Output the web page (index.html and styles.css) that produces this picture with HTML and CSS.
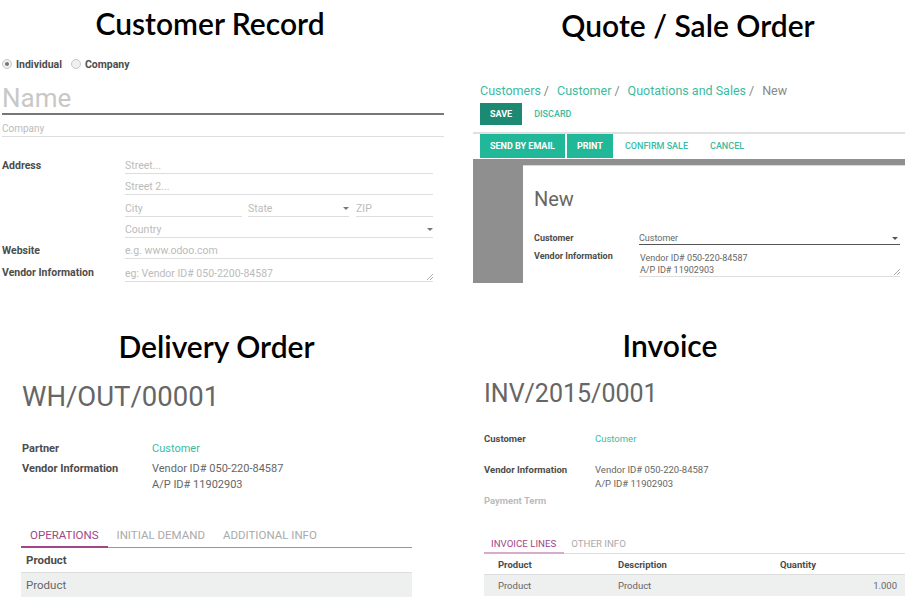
FILE: index.html
```html
<!DOCTYPE html>
<html lang="en">
<head>
<meta charset="utf-8">
<title>Odoo records</title>
<link rel="stylesheet" href="styles.css">
</head>
<body>
<main class="board">

  <section class="panel customer">
    <h2 class="ptitle">Customer Record</h2>
    <div class="radios">
      <span class="radio checked"></span><span class="rlabel">Individual</span>
      <span class="radio"></span><span class="rlabel">Company</span>
    </div>
    <div class="name-input">Name</div>
    <div class="company-input">Company</div>
    <div class="cform">
      <div class="crow"><span class="clabel">Address</span><span class="cfield">Street...</span></div>
      <div class="crow"><span class="clabel"></span><span class="cfield">Street 2...</span></div>
      <div class="crow gap1"><span class="clabel"></span><span class="cfield city">City</span><span class="cfield state">State<i class="caret"></i></span><span class="cfield zip">ZIP</span></div>
      <div class="crow"><span class="clabel"></span><span class="cfield">Country<i class="caret"></i></span></div>
      <div class="crow"><span class="clabel">Website</span><span class="cfield">e.g. www.odoo.com</span></div>
      <div class="crow tall"><span class="clabel">Vendor Information</span><span class="cfield">eg: Vendor ID# 050-2200-84587<svg class="grip" width="6" height="6" viewBox="0 0 6 6"><path d="M6 0L0 6M6 3L3 6" stroke="#999" stroke-width="0.8" fill="none"/></svg></span></div>
    </div>
  </section>

  <section class="panel quote">
    <h2 class="ptitle">Quote / Sale Order</h2>
    <nav class="crumbs"><a>Customers</a><span class="sep">/</span><a>Customer</a><span class="sep">/</span><a>Quotations and Sales</a><span class="sep">/</span><span class="cur">New</span></nav>
    <div class="cp-buttons"><span class="btn dark">SAVE</span><span class="btn link-btn">DISCARD</span></div>
    <div class="statusbar"><span class="btn">SEND BY EMAIL</span><span class="btn">PRINT</span><span class="btn link-btn">CONFIRM SALE</span><span class="btn link-btn">CANCEL</span></div>
    <div class="backdrop">
      <div class="sheet">
        <div class="sheet-title">New</div>
        <div class="qrow"><span class="qlabel">Customer</span><span class="qfield select">Customer<i class="caret dark"></i></span></div>
        <div class="qrow area-row"><span class="qlabel">Vendor Information</span><span class="qfield area"><span>Vendor ID# 050-220-84587<br>A/P ID# 11902903</span><svg class="grip" width="6" height="6" viewBox="0 0 6 6"><path d="M6 0L0 6M6 3L3 6" stroke="#999" stroke-width="0.8" fill="none"/></svg></span></div>
      </div>
    </div>
  </section>

  <section class="panel delivery">
    <h2 class="ptitle">Delivery Order</h2>
    <div class="doc-name">WH/OUT/00001</div>
    <div class="dfields">
      <div class="drow"><span class="dlabel">Partner</span><span class="dval link">Customer</span></div>
      <div class="drow"><span class="dlabel">Vendor Information</span><span class="dval">Vendor ID# 050-220-84587<br>A/P ID# 11902903</span></div>
    </div>
    <div class="dtabs"><span class="dtab active">OPERATIONS</span><span class="dtab">INITIAL DEMAND</span><span class="dtab">ADDITIONAL INFO</span></div>
    <div class="dtable">
      <div class="dthead">Product</div>
      <div class="dtrow">Product</div>
    </div>
  </section>

  <section class="panel invoice">
    <h2 class="ptitle">Invoice</h2>
    <div class="inv-name">INV/2015/0001</div>
    <div class="ifields">
      <div class="irow"><span class="ilabel">Customer</span><span class="ival link">Customer</span></div>
      <div class="irow vendor"><span class="ilabel">Vendor Information</span><span class="ival">Vendor ID# 050-220-84587<br>A/P ID# 11902903</span></div>
      <div class="irow term"><span class="ilabel">Payment Term</span></div>
    </div>
    <div class="itabs"><span class="itab active">INVOICE LINES</span><span class="itab">OTHER INFO</span></div>
    <div class="itable">
      <div class="ithead"><span>Product</span><span>Description</span><span>Quantity</span></div>
      <div class="itrow"><span>Product</span><span>Product</span><span class="num">1.000</span></div>
    </div>
  </section>

</main>
</body>
</html>
```

FILE: styles.css
```css
* { box-sizing: border-box; margin: 0; padding: 0; }
html, body { width: 905px; height: 600px; overflow: hidden; background: #fff; }
body { font-family: Roboto, "Liberation Sans", sans-serif; color: #666; }

.board {
  display: grid;
  grid-template-columns: 473px 432px;
  grid-template-rows: 300px 300px;
  width: 905px;
  height: 600px;
}
.panel { overflow: hidden; }

.ptitle {
  font-family: Lato, "Liberation Sans", sans-serif;
  font-weight: 600;
  font-size: 30px;
  line-height: 35px;
  color: #000;
  text-align: center;
  white-space: nowrap;
}

.link { color: #3bbb9f; }

/* carets and grips */
.caret {
  width: 0; height: 0;
  border-left: 3px solid transparent;
  border-right: 3px solid transparent;
  border-top: 3px solid #777;
  flex: none;
}
.caret.dark { border-top-color: #555; margin-right: 2px; }
.grip { flex: none; align-self: flex-end; margin-bottom: 1px; }

/* ---------- Customer record ---------- */
.customer { padding-left: 2px; }
.customer .ptitle { width: 416px; margin-top: 6px; }

.radios {
  display: flex;
  align-items: center;
  height: 14px;
  margin-top: 16px;
  font-weight: 700;
  font-size: 10.5px;
  color: #4c4c4c;
}
.radio {
  width: 10px; height: 10px;
  border-radius: 50%;
  border: 1px solid #c8c8c8;
  background: #f0f0f0;
  display: flex;
  align-items: center;
  justify-content: center;
}
.radio.checked::after {
  content: "";
  width: 4px; height: 4px;
  border-radius: 50%;
  background: #777;
}
.rlabel { margin-left: 4px; margin-right: 9px; }

.name-input {
  margin-top: 12px;
  width: 442px;
  font-size: 26px;
  line-height: 30px;
  color: #c8c8c8;
  border-bottom: 2px solid #777;
}
.company-input {
  margin-top: 7px;
  width: 442px;
  font-size: 10px;
  line-height: 14px;
  color: #bbb;
  border-bottom: 1px solid #ddd;
}

.cform { margin-top: 16px; }
.crow { display: flex; }
.crow.gap1 { margin-top: 1px; }
.clabel {
  width: 123px;
  flex: none;
  font-weight: 700;
  font-size: 10.5px;
  color: #4c4c4c;
  padding-top: 5px;
  line-height: 15px;
}
.cfield {
  width: 308px;
  height: 21px;
  padding-top: 5px;
  line-height: 15px;
  font-size: 10.5px;
  color: #bbb;
  border-bottom: 1px solid #ddd;
  display: flex;
  align-items: center;
  justify-content: space-between;
}
.cfield .caret { align-self: center; margin-top: -1px; }
.cfield.city { width: 117px; }
.cfield.state { width: 101px; margin-left: 6px; }
.cfield.zip { width: 77px; margin-left: 7px; }
.crow.tall .clabel { padding-top: 6px; }
.crow.tall .cfield { height: 23px; padding-top: 6px; }

/* ---------- Quote ---------- */
.quote .ptitle { width: 430px; margin-top: 8px; }

.crumbs {
  display: flex;
  margin-top: 40px;
  padding-left: 7px;
  font-size: 12.5px;
  line-height: 16px;
  white-space: nowrap;
}
.crumbs a { color: #3bbb9f; text-decoration: none; }
.crumbs .sep { color: #888; margin: 0 8px 0 3px; }
.crumbs .cur { color: #888; }

.cp-buttons {
  display: flex;
  margin-top: 4px;
  padding-left: 7px;
  height: 22px;
}
.btn {
  display: block;
  height: 22px;
  line-height: 22px;
  padding: 0 10px;
  font-size: 9px;
  font-weight: 700;
  color: #fff;
  background: #21b799;
  white-space: nowrap;
}
.btn + .btn { margin-left: 2px; }
.btn.dark { background: #1c8a72; }
.btn.link-btn { background: transparent; color: #3bbb9f; font-weight: 500; }

.statusbar {
  display: flex;
  margin-top: 7px;
  margin-bottom: 1px;
  padding-left: 7px;
  border-top: 2px solid #e0e0e0;
  height: 26px;
}
.statusbar .btn { height: 24px; line-height: 24px; }

.backdrop {
  height: 124px;
  background: #8f8f8f;
  padding: 6px 0 0 50px;
}
.sheet {
  height: 118px;
  background: #fff;
  border-top: 1px solid #d8d8d8;
  padding-left: 11px;
}
.sheet-title {
  margin-top: 21px;
  font-size: 20px;
  line-height: 24px;
  color: #666;
}
.qrow {
  display: flex;
  font-size: 9px;
  line-height: 12px;
  margin-top: 21px;
}
.qrow.area-row { margin-top: 5px; }
.qlabel {
  width: 105px;
  flex: none;
  font-weight: 700;
  color: #4c4c4c;
}
.qfield {
  width: 261px;
  color: #666;
  display: flex;
  justify-content: space-between;
  align-items: center;
}
.qfield.select { border-bottom: 1px solid #555; }
.qfield.area {
  padding-top: 2px;
  padding-left: 1px;
  border-bottom: 1px solid #ddd;
  align-items: flex-start;
}

/* ---------- Delivery ---------- */
.delivery .ptitle { width: 433px; margin-top: 29px; }
.doc-name {
  margin-top: 17px;
  padding-left: 22px;
  font-size: 27.5px;
  line-height: 32px;
  color: #666;
}
.dfields { margin-top: 28px; padding-left: 22px; }
.drow { display: flex; font-size: 11px; line-height: 16px; }
.drow + .drow { margin-top: 4px; }
.dlabel { width: 130px; flex: none; font-weight: 700; color: #4c4c4c; }
.dval { color: #666; }
.dval.link { color: #3bbb9f; }

.dtabs {
  display: flex;
  margin: 35px 0 0 21px;
  width: 391px;
  border-bottom: 1px solid #999;
}
.dtab {
  font-size: 11.5px;
  line-height: 14px;
  padding: 0 9px 4px;
  color: #aaa;
  white-space: nowrap;
}
.dtab.active {
  color: #a24689;
  border-bottom: 2px solid #a24689;
  margin-bottom: -1px;
}
.dtable { margin-left: 21px; width: 391px; font-size: 11.5px; line-height: 16px; }
.dthead {
  padding: 4px 5px;
  font-weight: 700;
  color: #4c4c4c;
  border-bottom: 1px solid #ddd;
}
.dtrow { padding: 4px 5px; background: #eeefef; color: #666; }

/* ---------- Invoice ---------- */
.invoice .ptitle { width: 394px; margin-top: 28px; }
.inv-name {
  margin-top: 16px;
  padding-left: 11px;
  font-size: 25px;
  line-height: 30px;
  color: #666;
}
.ifields { margin-top: 23px; padding-left: 11px; }
.irow { display: flex; font-size: 9.5px; line-height: 14px; }
.ilabel { width: 111px; flex: none; font-weight: 700; color: #4c4c4c; }
.ival { color: #666; }
.ival.link { color: #3bbb9f; }
.irow.vendor { margin-top: 17px; }
.irow.term { margin-top: 3px; }
.irow.term .ilabel { color: #bbb; }

.itabs {
  display: flex;
  margin: 30px 0 0 11px;
  border-bottom: 1px solid #ddd;
}
.itab {
  font-size: 9.7px;
  line-height: 12px;
  padding: 0 8px 2px 7px;
  color: #aaa;
  white-space: nowrap;
}
.itab.active {
  color: #a24689;
  border-bottom: 2px solid #d9aacb;
  margin-bottom: -1px;
}
.itable { margin-left: 11px; font-size: 9.5px; line-height: 14px; }
.ithead, .itrow {
  display: grid;
  grid-template-columns: 120px 162px 1fr;
  padding: 4px 8px 2px 14px;
}
.ithead { font-weight: 700; color: #4c4c4c; border-bottom: 1px solid #ddd; }
.itrow { padding-bottom: 3px; background: #eeefef; color: #666; }
.num { text-align: right; }
```
